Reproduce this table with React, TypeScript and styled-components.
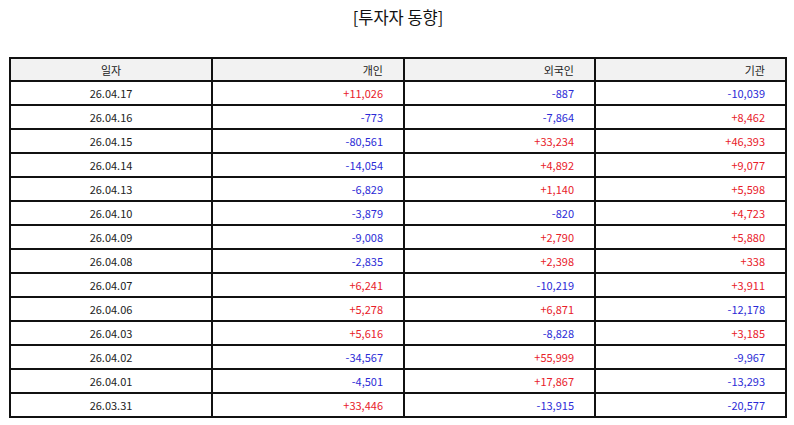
import styled, { createGlobalStyle } from 'styled-components';

const GlobalStyle = createGlobalStyle`
  html, body {
    margin: 0;
    padding: 0;
    background: #fff;
  }
  body {
    font-family: 'Noto Sans CJK KR', 'Noto Sans', sans-serif;
  }
`;

type Row = [string, string, string, string];

const rows: Row[] = [
  ['26.04.17', '+11,026', '-887', '-10,039'],
  ['26.04.16', '-773', '-7,864', '+8,462'],
  ['26.04.15', '-80,561', '+33,234', '+46,393'],
  ['26.04.14', '-14,054', '+4,892', '+9,077'],
  ['26.04.13', '-6,829', '+1,140', '+5,598'],
  ['26.04.10', '-3,879', '-820', '+4,723'],
  ['26.04.09', '-9,008', '+2,790', '+5,880'],
  ['26.04.08', '-2,835', '+2,398', '+338'],
  ['26.04.07', '+6,241', '-10,219', '+3,911'],
  ['26.04.06', '+5,278', '+6,871', '-12,178'],
  ['26.04.03', '+5,616', '-8,828', '+3,185'],
  ['26.04.02', '-34,567', '+55,999', '-9,967'],
  ['26.04.01', '-4,501', '+17,867', '-13,293'],
  ['26.03.31', '+33,446', '-13,915', '-20,577'],
];

export default function App() {
  return (
    <Page>
      <GlobalStyle />
      <Title>[투자자 동향]</Title>
      <Table>
        <colgroup>
          <col style={{ width: 202 }} />
          <col style={{ width: 192 }} />
          <col style={{ width: 191 }} />
          <col style={{ width: 191 }} />
        </colgroup>
        <thead>
          <tr>
            <Th $align="center">일자</Th>
            <Th>개인</Th>
            <Th>외국인</Th>
            <Th>기관</Th>
          </tr>
        </thead>
        <tbody>
          {rows.map(([date, ...vals]) => (
            <tr key={date}>
              <DateCell>{date}</DateCell>
              {vals.map((v, i) => (
                <NumCell key={i} $up={v.startsWith('+')}>
                  {v}
                </NumCell>
              ))}
            </tr>
          ))}
        </tbody>
      </Table>
    </Page>
  );
}

const Page = styled.div`
  width: 794px;
  height: 425px;
  box-sizing: border-box;
  padding: 5px 8px 0 10px;
  display: flex;
  flex-direction: column;
  align-items: center;
`;

const Title = styled.div`
  font-size: 16.5px;
  color: #111;
  line-height: 24px;
  height: 24px;
  margin-bottom: 28px;
`;

const Table = styled.table`
  width: 776px;
  border-collapse: collapse;
  table-layout: fixed;
  font-size: 11px;
  color: #222;
`;

const Th = styled.th<{ $align?: string }>`
  background: #f2f2f2;
  font-weight: normal;
  height: 21px;
  padding: 0 20px 0 0;
  border: 2px solid #111;
  text-align: ${(p) => p.$align ?? 'right'};
  ${(p) => (p.$align === 'center' ? 'padding: 0;' : '')}
`;

const DateCell = styled.td`
  height: 22px;
  padding: 0;
  border: 2px solid #111;
  text-align: center;
`;

const NumCell = styled.td<{ $up: boolean }>`
  height: 22px;
  padding: 0 20px 0 0;
  border: 2px solid #111;
  text-align: right;
  color: ${(p) => (p.$up ? '#e8202a' : '#2b2bd6')};
`;
